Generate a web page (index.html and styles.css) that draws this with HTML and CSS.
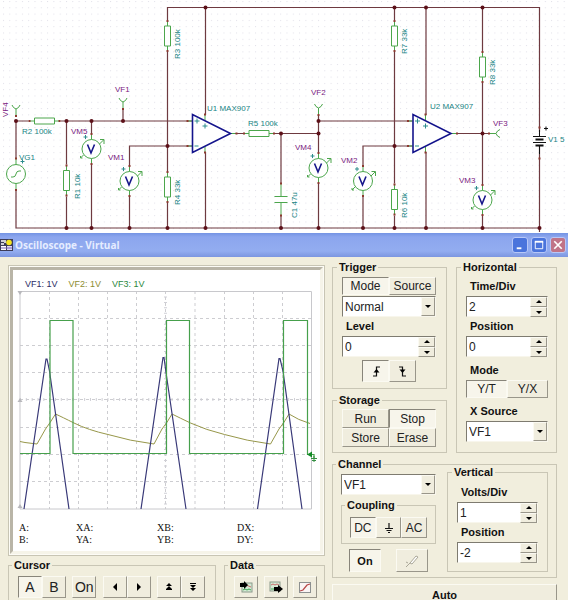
FILE: index.html
```html
<!DOCTYPE html>
<html lang="en">
<head>
<meta charset="utf-8">
<title>Oscilloscope - Virtual</title>
<link rel="stylesheet" href="styles.css">
</head>
<body>
<svg class="schematic" viewBox="0 0 568 233" role="img" aria-label="Circuit schematic">
  <defs>
    <pattern id="dots" x="3" y="1" width="6.3" height="6.3" patternUnits="userSpaceOnUse"><rect width="1" height="1" fill="#e0dfe8"/></pattern>
    <g id="res"><path class="gap" d="M0-16V16"/><path class="part" d="M0-15V-10M0 10V15M-3-10H3V10H-3Z"/><path class="pin" d="M-1-15h2M-1 15h2"/></g>
    <g id="meter">
      <path class="gap" d="M0-15V15"/>
      <circle class="part" r="9.5"/>
      <path class="part" d="M0-14V-9.5M0 9.5V14M8-5L12-9M8.500-9.500H12.500V-5M-8 6L-11 9M-11 7v2h2"/>
      <path class="sign" d="M-8-12h4M-6-14v4"/>
      <path class="pin" d="M-1-15h2M-1 15h2"/>
      <path d="M-4-4.500L-.5 4L3-4.500" fill="none" stroke="#16168a" stroke-width="1.600"/>
    </g>
    <g id="amp">
      <path class="part" d="M-5 6.500H0M-5 31.500H0M38 19H43M12.500 0V6M12.500 32V38"/>
      <path d="M0 0V38L38 19Z" fill="#fff" stroke="#14148c" stroke-width="1.600"/>
      <path class="sign" d="M2 6.500h5M4.500 4v5M2 31.500h4M10 11.500h5M12.500 9v5"/>
      <path class="pin" d="M-6 6.500h2M-6 31.500h2M43 19h2M11.500 0h2M11.500 38h2"/>
    </g>
    <g id="probe"><path class="part" d="M0 0V-7M-4-11Q-3-8 0-7Q3-8 4-11"/><path class="pin" d="M-1 0h2"/></g>
  </defs>
  <rect width="568" height="233" fill="#fff"/>
  <rect width="568" height="233" fill="url(#dots)"/>
  <g class="wire">
    <path d="M167.500 228V7.500H539.500V132M539.500 146V232M16 121V228H539.500M16 121H192M66.500 121V228M91.500 121V228M129.500 228V146H192M205.500 7.500V115M205.500 152V228M235 133.500H318.500M281 133.500V228M318.500 115V228M318.500 121H412M394.500 7.500V228M363 228V146H412M426 7.500V115M426 152V228M455 133.500H490M482.500 7.500V228M123 121V110"/>
  </g>
  <g class="node">
    <circle cx="16" cy="121" r="2"/><circle cx="66.500" cy="121" r="2"/><circle cx="91.500" cy="121" r="2"/><circle cx="123" cy="121" r="2"/>
    <circle cx="167.500" cy="146" r="2"/><circle cx="205.500" cy="7.500" r="2"/><circle cx="281" cy="133.500" r="2"/><circle cx="318.500" cy="133.500" r="2"/><circle cx="318.500" cy="121" r="2"/>
    <circle cx="394.500" cy="7.500" r="2"/><circle cx="426" cy="7.500" r="2"/><circle cx="482.500" cy="7.500" r="2"/><circle cx="394.500" cy="146" r="2"/><circle cx="482.500" cy="133.500" r="2"/>
    <circle cx="66.500" cy="228" r="2"/><circle cx="91.500" cy="228" r="2"/><circle cx="129.500" cy="228" r="2"/><circle cx="167.500" cy="228" r="2"/><circle cx="205.500" cy="228" r="2"/><circle cx="281" cy="228" r="2"/><circle cx="318.500" cy="228" r="2"/>
    <circle cx="363" cy="228" r="2"/><circle cx="394.500" cy="228" r="2"/><circle cx="426" cy="228" r="2"/><circle cx="482.500" cy="228" r="2"/><circle cx="539.500" cy="228" r="2"/>
  </g>
  <use href="#res" transform="translate(44.500 121) rotate(90)"/>
  <use href="#res" transform="translate(259 133.500) rotate(90)"/>
  <use href="#res" x="66.500" y="180.500"/>
  <use href="#res" x="167.500" y="36"/>
  <use href="#res" x="167.500" y="187"/>
  <use href="#res" x="394.500" y="36"/>
  <use href="#res" x="394.500" y="199.500"/>
  <use href="#res" x="482.500" y="67"/>
  <use href="#meter" x="91.500" y="149"/>
  <use href="#meter" x="129.500" y="181"/>
  <use href="#meter" x="318.500" y="168"/>
  <use href="#meter" x="363" y="181"/>
  <use href="#meter" x="482.500" y="200"/>
  <use href="#amp" x="192.500" y="114.500"/>
  <use href="#amp" x="413" y="114.500"/>
  <use href="#probe" x="16" y="116"/>
  <use href="#probe" x="123" y="109"/>
  <use href="#probe" x="318.500" y="115"/>
  <use href="#probe" transform="translate(489 133.500) rotate(90)"/>
  <g>
    <path class="gap" d="M16 159V189"/>
    <circle class="part" cx="16" cy="174" r="9.500"/>
    <path class="part" d="M16 159v5.500M16 183.500v5.500M11 177H13Q15.500 177 16 174Q16.500 171 19 171H21"/>
    <path class="sign" d="M20.500 161.500h4M22.500 159.500v4"/>
    <path class="pin" d="M15 158.500h2M15 190h2"/>
  </g>
  <g>
    <path class="gap" d="M281 184V215"/>
    <path class="part" d="M281 184V196.500M274.500 196.500H287.500M274.500 202.500H287.500M281 202.500V215"/>
    <path class="pin" d="M280 183.500h2M280 215.500h2"/>
  </g>
  <path class="battery" d="M533 136.500h13M533 142.500h13M544 128.500h4M546 126.500v4M539.500 130v6M539.500 146v8"/>
  <path class="battery thick" d="M535.500 139.500h8M535.500 145.500h8"/>
  <path class="pin" d="M538.500 127.500h2M538.500 158.500h2"/>
  <g class="name">
    <text x="207" y="111">U1 MAX907</text><text x="430" y="109">U2 MAX907</text>
    <text x="22" y="134">R2 100k</text><text x="248" y="126">R5 100k</text>
    <text x="19" y="160">VG1</text><text x="548" y="142">V1 5</text>
    <text transform="translate(80 199) rotate(-90)">R1 10k</text>
    <text transform="translate(180 59) rotate(-90)">R3 100k</text>
    <text transform="translate(180 205) rotate(-90)">R4 33k</text>
    <text transform="translate(297 218) rotate(-90)">C1 47u</text>
    <text transform="translate(407 54) rotate(-90)">R7 33k</text>
    <text transform="translate(407 218) rotate(-90)">R6 10k</text>
    <text transform="translate(495 85) rotate(-90)">R8 33k</text>
  </g>
  <g class="name meter-name">
    <text transform="translate(8 117) rotate(-90)">VF4</text>
    <text x="115" y="92">VF1</text><text x="311" y="95">VF2</text><text x="493" y="126">VF3</text>
    <text x="71" y="134">VM5</text><text x="108" y="160">VM1</text><text x="295" y="150">VM4</text><text x="341" y="163">VM2</text><text x="459" y="183">VM3</text>
  </g>
</svg>

<section class="window">
  <header class="titlebar">
    <svg class="app-icon" viewBox="0 0 13 14" aria-hidden="true">
      <rect y="1" width="13" height="12" fill="#3c3c58"/><path d="M1 3h3M1 6h3M5 2v3" stroke="#fff" stroke-width="1.500"/><circle cx="9" cy="4.500" r="2.800" fill="#f4e520"/><rect x="1" y="8" width="5" height="4" fill="#fff"/><rect x="7" y="8" width="5" height="4" fill="#ddd6f4"/><path d="M1 10h11" stroke="#7864b8"/>
    </svg>
    <h1>Oscilloscope - Virtual</h1>
    <div class="window-buttons">
      <button type="button" aria-label="Minimize"><svg viewBox="0 0 15 15"><path d="M4 11h5" stroke="#fff" stroke-width="2"/></svg></button>
      <button type="button" aria-label="Maximize"><svg viewBox="0 0 15 15"><path d="M3.500 4v7.500h8V4" fill="none" stroke="#fff"/><path d="M3 4h9" stroke="#fff" stroke-width="2"/></svg></button>
      <button type="button" class="close" aria-label="Close"><svg viewBox="0 0 15 15"><path d="M3.500 3.500l8 8M11.500 3.500l-8 8" stroke="#fff" stroke-width="1.800"/></svg></button>
    </div>
  </header>

  <main class="scope">
    <div class="display-column">
      <div class="display-frame">
        <div class="display">
          <div class="traces"><span class="trace-1">VF1: 1V</span><span class="trace-2">VF2: 1V</span><span class="trace-3">VF3: 1V</span></div>
          <svg class="plot" viewBox="13 290 307 222" role="img" aria-label="Signal traces">
            <path class="grid" d="M49.500 291V509M78.500 291V509M107.500 291V509M136.500 291V509M165.500 291V509M195 291V509M224.500 291V509M253.500 291V509M282.500 291V509M20 318.500H311.500M20 345.500H311.500M20 372.500H311.500M20 399.500H311.500M20 427.500H311.500M20 454.500H311.500M20 481.500H311.500"/>
            <path d="M20 399.500H311.500" stroke="#d0d0d6" stroke-width="3" stroke-dasharray="1 4.830" fill="none"/>
            <path d="M165.500 291V509" stroke="#d0d0d6" stroke-width="3" stroke-dasharray="1 4.450" fill="none"/>
            <path d="M20 291.500H311.500V509H20Z" fill="none" stroke="#c8c8cc"/>
            <path d="M17.500 291h5l-2.500 4zM17.500 402l2.500-4 2.500 4zM17.500 508l2.500-4 2.500 4z" fill="#b8b8bc"/>
            <path d="M20 441.500L25 442.500L37 444L45.500 429Q50 423 55.500 414Q62 417 74 423Q88 430 108 434.500Q130 441 154 444L162 429Q167 423 172 414Q180 418 190.500 423Q206 430 224.500 434.500Q247 441 270.500 444L279 429Q284 423 289 414Q298 420 310 423.500" fill="none" stroke="#97974a"/>
            <path d="M24 509L46 359L47 359L49.500 371L69 509M141 509L163 357.500L164 357.500L166.500 376L186 509M257.500 509L279 358.500L280 358.500L283 371L302 509" fill="none" stroke="#393978" stroke-width="1.200"/>
            <path d="M20 453.500H50V320.500H73V453.500H166.500V320.500H189.500V453.500H283.500V320.500H307.500V454.500H314V458" fill="none" stroke="#46a04c" stroke-width="1.200"/>
            <path d="M307 454.500l5-3v6z" fill="#128a28"/><path d="M311 458.500h6M312 460.500h4M314 456v6" stroke="#348f42" fill="none"/>
          </svg>
          <div class="readings">
            <span>A:</span><span>XA:</span><span>XB:</span><span>DX:</span>
            <span>B:</span><span>YA:</span><span>YB:</span><span>DY:</span>
          </div>
        </div>
      </div>
      <div class="tools">
        <fieldset class="cursor">
          <legend>Cursor</legend>
          <div class="row big">
            <div class="pair"><button type="button" class="pressed" aria-pressed="true">A</button><button type="button">B</button></div>
            <button type="button">On</button>
            <div class="pair">
              <button type="button" aria-label="Left"><svg class="glyph" viewBox="0 0 12 12"><path d="M8 2v8L4 6z"/></svg></button>
              <button type="button" aria-label="Right"><svg class="glyph" viewBox="0 0 12 12"><path d="M4 2v8l4-4z"/></svg></button>
            </div>
            <div class="pair">
              <button type="button" aria-label="Next peak"><svg class="glyph" viewBox="0 0 12 12"><path d="M6 2l3 3H3zM6 5l3 3H3zM3 8h6v1H3z"/></svg></button>
              <button type="button" aria-label="Next valley"><svg class="glyph" viewBox="0 0 12 12"><path d="M3 2h6v1H3zM3 4h6L6 7zM3 7h6l-3 3z"/></svg></button>
            </div>
          </div>
        </fieldset>
        <fieldset class="data">
          <legend>Data</legend>
          <div class="row big">
            <button type="button" aria-label="Import"><svg class="picture" viewBox="0 0 14 14"><rect x="3" y="3" width="10" height="9" fill="#d5ead5" stroke="#8a9a8a"/><path d="M4 10l2-1 2 1 2-1 2 1" stroke="#3ca650" fill="none"/><path d="M7 5l5 2" stroke="#c86a6a"/><path d="M1 3h4V1l4 4-4 4V7H1z" fill="#000"/></svg></button>
            <button type="button" aria-label="Export"><svg class="picture" viewBox="0 0 14 14"><rect x="1" y="2" width="10" height="9" fill="#d5ead5" stroke="#8a9a8a"/><path d="M2 5l2-1 2 1 2-1 2 1" stroke="#c86a6a" fill="none"/><path d="M2 9h3" stroke="#3ca650"/><path d="M5 7h4V5l5 4-5 4v-2H5z" fill="#000"/></svg></button>
            <button type="button" aria-label="Curve"><svg class="picture" viewBox="0 0 14 14"><rect x="1.500" y="2.500" width="11" height="10" fill="#faf4f4" stroke="#8c9090"/><path d="M2 11l3-1 4-5 3-1" stroke="#b84848" stroke-width="1.300" fill="none"/></svg></button>
          </div>
        </fieldset>
      </div>
    </div>

    <div class="control-column">
      <div class="upper">
        <div class="stack">
          <fieldset class="trigger">
            <legend>Trigger</legend>
            <div class="pair"><button type="button" class="pressed" aria-pressed="true">Mode</button><button type="button">Source</button></div>
            <div class="dropdown"><select aria-label="Trigger mode"><option>Normal</option></select><svg class="arrow" viewBox="0 0 12 17"><path d="M3 7h6l-3 3z"/></svg></div>
            <label for="level">Level</label>
            <div class="spin"><input id="level" value="0"><div><button type="button" aria-label="Raise level"><svg viewBox="0 0 10 8"><path d="M5 2l3 3H2z"/></svg></button><button type="button" aria-label="Lower level"><svg viewBox="0 0 10 8"><path d="M2 3h6L5 6z"/></svg></button></div></div>
            <div class="pair edges">
              <button type="button" class="pressed" aria-pressed="true" aria-label="Rising edge"><svg class="glyph" viewBox="0 0 12 12"><path d="M3 11h3.500V2H10" class="line"/><path d="M3.500 7.500h6l-3-3.500z"/></svg></button>
              <button type="button" aria-label="Falling edge"><svg class="glyph" viewBox="0 0 12 12"><path d="M2 2h3.500v9H9" class="line"/><path d="M2.500 4.500h6l-3 3.500z"/></svg></button>
            </div>
          </fieldset>
          <fieldset class="storage">
            <legend>Storage</legend>
            <div class="quad"><button type="button">Run</button><button type="button" class="pressed" aria-pressed="true">Stop</button><button type="button">Store</button><button type="button">Erase</button></div>
          </fieldset>
        </div>
        <fieldset class="horizontal">
          <legend>Horizontal</legend>
          <label for="time">Time/Div</label>
          <div class="spin"><input id="time" value="2"><div><button type="button" aria-label="More time"><svg viewBox="0 0 10 8"><path d="M5 2l3 3H2z"/></svg></button><button type="button" aria-label="Less time"><svg viewBox="0 0 10 8"><path d="M2 3h6L5 6z"/></svg></button></div></div>
          <label for="hpos">Position</label>
          <div class="spin"><input id="hpos" value="0"><div><button type="button" aria-label="Move right"><svg viewBox="0 0 10 8"><path d="M5 2l3 3H2z"/></svg></button><button type="button" aria-label="Move left"><svg viewBox="0 0 10 8"><path d="M2 3h6L5 6z"/></svg></button></div></div>
          <span class="caption">Mode</span>
          <div class="pair"><button type="button" class="pressed" aria-pressed="true">Y/T</button><button type="button">Y/X</button></div>
          <label for="xsource" class="caption">X Source</label>
          <div class="dropdown"><select id="xsource"><option>VF1</option></select><svg class="arrow" viewBox="0 0 12 17"><path d="M3 7h6l-3 3z"/></svg></div>
        </fieldset>
      </div>

      <fieldset class="channel">
        <legend>Channel</legend>
        <div class="lower">
          <div class="source">
            <div class="dropdown"><select aria-label="Channel"><option>VF1</option></select><svg class="arrow" viewBox="0 0 12 17"><path d="M3 7h6l-3 3z"/></svg></div>
            <fieldset class="coupling">
              <legend>Coupling</legend>
              <div class="pair"><button type="button" class="pressed" aria-pressed="true">DC</button><button type="button" aria-label="Ground"><svg class="glyph" viewBox="0 0 12 12"><path d="M6 1v5M2 6.500h8M3.500 8.500h5M5 10.500h2" class="line"/></svg></button><button type="button">AC</button></div>
            </fieldset>
            <div class="switches">
              <button type="button" class="pressed strong" aria-pressed="true">On</button>
              <button type="button" aria-label="Probe"><svg class="picture" viewBox="0 0 14 14"><path d="M1 13l4-4M5 9l6-7 2 1-6 7zM1 8l2 1" fill="#fff" stroke="#aaa798"/></svg></button>
            </div>
          </div>
          <fieldset class="vertical">
            <legend>Vertical</legend>
            <label for="volts">Volts/Div</label>
            <div class="spin"><input id="volts" value="1"><div><button type="button" aria-label="More volts"><svg viewBox="0 0 10 8"><path d="M5 2l3 3H2z"/></svg></button><button type="button" aria-label="Fewer volts"><svg viewBox="0 0 10 8"><path d="M2 3h6L5 6z"/></svg></button></div></div>
            <label for="vpos">Position</label>
            <div class="spin"><input id="vpos" value="-2"><div><button type="button" aria-label="Move up"><svg viewBox="0 0 10 8"><path d="M5 2l3 3H2z"/></svg></button><button type="button" aria-label="Move down"><svg viewBox="0 0 10 8"><path d="M2 3h6L5 6z"/></svg></button></div></div>
          </fieldset>
        </div>
      </fieldset>
      <button type="button" class="auto strong">Auto</button>
    </div>
  </main>
</section>
</body>
</html>
```
FILE: styles.css
```css
* { box-sizing: border-box; }

body {
  margin: 0;
  height: 100vh;
  overflow: hidden;
  background: #f1eedd;
  color: #111;
  font-family: "Liberation Sans", Arial, sans-serif;
  font-size: 12px;
}

svg { display: block; }

/* Schematic */
.schematic { width: 100%; height: auto; }
.wire { fill: none; stroke: #6e3a40; stroke-width: 1.2; }
.node { fill: #5c1018; }
.gap { fill: none; stroke: #fff; stroke-width: 3; }
.part { fill: #fff; stroke: #4ca64c; }
.pin { fill: none; stroke: #8c3a30; stroke-width: 2; }
.sign { fill: none; stroke: #2c8c8c; }
.battery { fill: none; stroke: #111; }
.thick { stroke-width: 2; }
.name { fill: #188484; font-size: 8px; }
.meter-name { fill: #7a2080; }

/* Window */
.titlebar {
  display: flex;
  align-items: center;
  height: 24px;
  padding-right: 2px;
  background: linear-gradient(#7494e4, #8ca6ee 4px, #93adf0 18px, #7c96e0);
}
.app-icon { width: 13px; height: 14px; }
h1 {
  flex: 1;
  margin: 0 0 0 2px;
  color: #e6edff;
  font: 700 10px/16px "Open Sans", sans-serif;
}
.window-buttons { display: flex; gap: 3px; }
.window-buttons button {
  width: 16px;
  height: 16px;
  padding: 0;
  border: 1px solid #b8c8f8;
  border-radius: 3px;
  background: #4a74dc;
}
.window-buttons .close { background: #c07488; }

.scope {
  display: grid;
  grid-template-columns: 317fr 225fr;
  gap: 7px;
  padding: 3px 11px 0 8px;
}
.display-column { padding-top: 5px; }

/* Display */
.display-frame {
  padding: 1px;
  border: 1px solid #c8c5b4;
  background: #fdfcf6;
}
.display {
  border: 3px solid;
  border-color: #b9b5a7 #f6f4e9 #f6f4e9 #b9b5a7;
  background: #fff;
}
.traces {
  display: flex;
  gap: 11px;
  padding: 8px 12px 0;
  font-size: 9px;
  line-height: 12px;
}
.trace-1 { color: #2c2c66; }
.trace-2 { color: #8c8c30; }
.trace-3 { color: #2c8840; }
.plot { width: 100%; height: auto; }
.grid { fill: none; stroke: #cdcdd1; stroke-dasharray: 3 3; }
.readings {
  display: grid;
  grid-template-columns: 57fr 81fr 80fr 83fr;
  padding: 10px 0 5px 6px;
  font: 10px/12px "Liberation Serif", serif;
}

/* Groups */
fieldset {
  min-width: 0;
  margin: 0;
  padding: 0;
  border: 1px solid #c9c6b5;
}
legend {
  margin-left: -5px;
  padding: 0 2px;
}
.tools legend { margin-left: 3px; }
legend, label, .caption, .strong {
  font-size: 11px;
  font-weight: bold;
  line-height: 14px;
}
label, .caption {
  display: block;
  margin: 2px 0 3px 4px;
}

/* Buttons */
button {
  display: flex;
  align-items: center;
  justify-content: center;
  min-width: 0;
  padding: 0;
  border: 1px solid;
  border-color: #fbfaf2 #99968a #99968a #fbfaf2;
  background: #f0edde;
  color: #222;
  font: 12px/14px "Liberation Sans", Arial, sans-serif;
}
button.strong { color: #111; font: bold 11px/14px "Liberation Sans", Arial, sans-serif; }
button.pressed {
  border-color: #88857a #fbfaf2 #fbfaf2 #88857a;
  background: #f7f5eb;
}
.pair { display: flex; height: 18px; }
.pair button { flex: 1; }
.glyph { width: 12px; height: 12px; }
.picture { width: 14px; height: 14px; }
.line { fill: none; stroke: #111; stroke-width: 1.2; }

/* Fields */
.dropdown, .spin {
  display: flex;
  height: 21px;
  border: 1px solid;
  border-color: #7e7b70 #f8f6ec #f8f6ec #7e7b70;
  background: #fff;
}
.dropdown { display: grid; grid-template-columns: 1fr 14px; }
select, input {
  width: 100%;
  min-width: 0;
  margin: 0;
  padding: 0 2px;
  border: 0;
  border-radius: 0;
  background: transparent;
  color: #222;
  font: 12px/16px "Liberation Sans", Arial, sans-serif;
}
select {
  grid-area: 1 / 1 / 2 / 3;
  appearance: none;
}
.arrow {
  grid-area: 1 / 2;
  width: 14px;
  height: 19px;
  border: 1px solid;
  border-color: #fbfaf2 #99968a #99968a #fbfaf2;
  background: #f0edde;
  pointer-events: none;
}
.spin > div {
  display: grid;
  flex: 0 0 17px;
  grid-template-rows: 1fr 1fr;
}
.spin svg { width: 10px; height: 8px; }

/* Left tools */
.tools {
  display: grid;
  grid-template-columns: 208fr 101fr;
  gap: 8px;
  margin-top: 2px;
}
.row { display: flex; padding: 4px 9px 9px; }
.row .pair, .row > button { height: 22px; }
.big button { font-size: 14px; }
.cursor .row { justify-content: space-between; padding-right: 10px; }
.cursor .pair { width: 48px; }
.cursor .row > button { width: 24px; }
.data .row { justify-content: space-between; padding-right: 7px; }
.data .row > button { width: 24px; }

/* Right controls */
.upper { display: grid; grid-template-columns: 115fr 101fr; gap: 9px; }
.trigger { padding: 3px 10px 6px 9px; }
.trigger .dropdown { margin-top: 1px; }
.trigger .edges { width: 54px; height: 22px; margin: 3px auto 0; }
.storage { margin-top: 4px; padding: 2px 10px 5px 9px; }
.quad { display: grid; grid-template-columns: 1fr 1fr; grid-auto-rows: 19px; }
.horizontal { padding: 3px 8px 0 9px; }
.horizontal .caption { margin-top: 6px; }

.channel { margin-top: 4px; padding: 0 8px 5px; }
.lower { display: grid; grid-template-columns: 95fr 101fr; gap: 11px; }
.source { padding-top: 3px; }
.coupling { margin-top: 3px; padding: 5px 8px; }
.coupling .pair { height: 21px; }
.switches { display: flex; justify-content: space-between; padding: 5px 8px 0; }
.switches button { width: 32px; height: 23px; }
.vertical { margin-top: -6px; padding: 4px 9px 6px; }
.auto { width: 100%; height: 22px; margin-top: 6px; }
```
